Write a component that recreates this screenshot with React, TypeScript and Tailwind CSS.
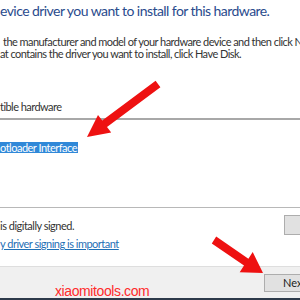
export default function App() {
  return (
    <div className="relative w-[300px] h-[300px] overflow-hidden bg-white font-['Lato',sans-serif]">
      <div className="h-[266px] flex flex-col">
        <p className="mt-[2px] h-[18px] text-[14px] leading-[18px] tracking-[-0.56px] text-[#2a4b8d] whitespace-nowrap">
          evice driver you want to install for this hardware.
        </p>
        <div className="mt-[16px] text-[11px] leading-[12px] tracking-[-0.55px] text-[#333] whitespace-nowrap">
          <p className="pl-[3px]">the manufacturer and model of your hardware device and then click Next.</p>
          <p>at contains the driver you want to install, click Have Disk.</p>
        </div>
        <p className="mt-[41px] h-[12px] text-[11px] leading-[12px] tracking-[-0.55px] text-[#333] whitespace-nowrap">
          tible hardware
        </p>
        <div className="mt-[5px] h-[90px] border-t-2 border-b border-t-[#a8a8a8] border-b-[#b8b8b8]">
          <div className="mt-[22px] w-[78px] h-[11px] bg-[#3088d8] text-white text-[11px] leading-[11px] tracking-[-0.5px] whitespace-nowrap overflow-hidden">
            otloader Interface
          </div>
        </div>
        <div className="flex items-start justify-between">
          <div className="mt-[9px] text-[11px] leading-[18px] tracking-[-0.5px] whitespace-nowrap">
            <p className="text-[#333]">is digitally signed.</p>
            <p className="text-[#1f6fb5] underline">y driver signing is important</p>
          </div>
          <div className="mt-[7px] -mr-[20px] w-[36px] h-[20px] border border-[#adadad] bg-[#e1e1e1]" />
        </div>
      </div>
      <div className="h-[32px] bg-[#f0f0f0] border-t border-[#dedede] flex justify-end items-start">
        <div className="mt-[7px] -mr-[10px] w-[46px] h-[18px] border border-[#adadad] bg-[#e1e1e1] text-[11px] leading-[16px] text-[#222] pl-[18px]">
          Next
        </div>
      </div>
      <div className="h-[2px] bg-[#2d3a4a]" />

      <p className="absolute left-[55px] top-[283px] text-[14px] leading-[16px] tracking-[-0.4px] text-[#ff2a2a] font-['Liberation_Sans',sans-serif]">
        xiaomitools.com
      </p>
      <svg className="absolute inset-0 pointer-events-none" width="300" height="300" viewBox="0 0 300 300">
        <polygon
          fill="#ee1111"
          points="155.6,80.8 160.4,87.2 107,127 111.2,132.6 87,137 98,115 102.2,120.6"
        />
        <polygon
          fill="#ee1111"
          points="216.2,236.6 248.4,258.7 252.7,252 263,273 239.7,272.2 244,265.5 211.8,243.4"
        />
      </svg>
    </div>
  );
}
